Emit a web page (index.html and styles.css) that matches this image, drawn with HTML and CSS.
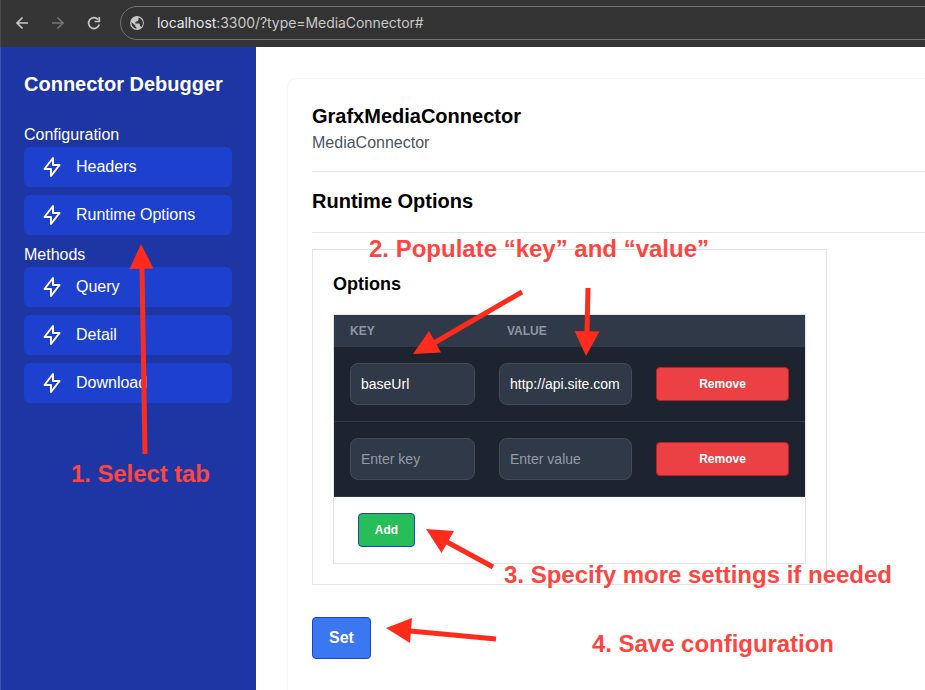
FILE: index.html
```html
<!DOCTYPE html>
<html lang="en">
<head>
<meta charset="utf-8">
<title>Connector Debugger</title>
<link rel="stylesheet" href="styles.css">
</head>
<body>
<svg class="defs" width="0" height="0" aria-hidden="true">
  <symbol id="bolt" viewBox="0 0 24 24"><path d="M13 10V3L4.500 14H11v7l8.500-11H13z" fill="none" stroke="#fff" stroke-width="2" stroke-linecap="round" stroke-linejoin="round"/></symbol>
</svg>
<header class="toolbar">
  <svg class="nav-icons" width="120" height="47" fill="none" stroke="#c7c7c7" stroke-width="1.7">
    <path d="M28 23H17.5M22.5 17.5L17 23L22.5 28.5"/>
    <path stroke="#757575" d="M52 23H62.5M57.5 17.5L63 23L57.5 28.5"/>
    <path d="M98 19.5A5.4 5.4 0 1 0 99.2 24.5M99.3 17V21.5H94.5"/>
  </svg>
  <div class="address">
    <svg class="globe" width="14" height="14" viewBox="0 0 14 14"><circle cx="7" cy="7" r="6.9" fill="#c7c7c7"/><path fill="#353535" d="M1.5 6.2L5.2 9.2V10.3L6.4 11.3V12.7A5.8 5.8 0 0 1 1.5 6.2ZM8.5 1.5A5.8 5.8 0 0 1 11.5 10.9L10.5 10.2H9.9V8.2L9.2 7.6H5.2V6.3H6.5V4.9H7.9L8.5 3.6Z"/></svg>
    <span class="url">localhost<span class="url-rest">:3300/?type=MediaConnector#</span></span>
  </div>
</header>
<div class="page">
  <aside class="sidebar">
    <h1 class="brand">Connector Debugger</h1>
    <h2 class="group">Configuration</h2>
    <a class="tab"><svg class="bolt"><use href="#bolt"/></svg>Headers</a>
    <a class="tab"><svg class="bolt"><use href="#bolt"/></svg>Runtime Options</a>
    <h2 class="group">Methods</h2>
    <a class="tab"><svg class="bolt"><use href="#bolt"/></svg>Query</a>
    <a class="tab"><svg class="bolt"><use href="#bolt"/></svg>Detail</a>
    <a class="tab"><svg class="bolt"><use href="#bolt"/></svg>Download</a>
  </aside>
  <main class="content">
    <section class="card">
      <div class="section intro"><h2 class="title name">GrafxMediaConnector</h2><p class="subtitle">MediaConnector</p></div>
      <div class="section"><h2 class="title">Runtime Options</h2></div>
      <div class="panel">
        <h3 class="panel-title">Options</h3>
        <div class="table">
          <div class="head"><span>KEY</span><span>VALUE</span><span></span></div>
          <div class="row"><input class="field" value="baseUrl"><input class="field" value="http://api.site.com"><button class="button remove">Remove</button></div>
          <div class="row"><input class="field" placeholder="Enter key"><input class="field" placeholder="Enter value"><button class="button remove">Remove</button></div>
          <div class="foot"><button class="button add">Add</button></div>
        </div>
      </div>
      <button class="set">Set</button>
    </section>
  </main>
</div>
<svg class="notes" width="925" height="690" viewBox="0 0 925 690">
  <g class="arrows">
    <path d="M145 454L142 268"/><path class="tip" d="M141 244L153.500 268.500L129.500 269Z"/>
    <path d="M522 292L434 343"/><path class="tip" d="M413 354L429 331L441 352.500Z"/>
    <path d="M588 288L587 332"/><path class="tip" d="M586 356L574.500 331L599.500 331.500Z"/>
    <path d="M493 567L447 542"/><path class="tip" d="M426 529L454 531L441.500 553Z"/>
    <path d="M496 639L410 631"/><path class="tip" d="M386 628L412 618L410 643Z"/>
  </g>
  <g class="labels">
    <text x="71" y="481.500" textLength="139">1. Select tab</text>
    <text x="369" y="256.500" textLength="340">2. Populate “key” and “value”</text>
    <text x="504" y="582.500" textLength="388">3. Specify more settings if needed</text>
    <text x="592" y="651.500" textLength="242">4. Save configuration</text>
  </g>
</svg>
</body>
</html>
```
FILE: styles.css
```css
* { box-sizing: border-box; }
body { margin: 0; height: 690px; overflow: hidden; position: relative; background: #fff; color: #000; font: 16px/24px "Liberation Sans", Arial, sans-serif; }
h1, h2, h3, p { margin: 0; font-size: inherit; font-weight: inherit; }
.defs { position: absolute; }
.toolbar { display: flex; align-items: center; height: 47px; background: #353535; border-left: 1px solid #4a4a4a; overflow: hidden; }
.nav-icons { flex: none; width: 119px; margin-left: -1px; margin-right: 1px; }
.address { flex: none; display: flex; align-items: center; width: 850px; height: 34px; margin-top: -1px; padding-left: 9px; border: 1px solid #737373; border-radius: 17px; background: #333; }
.globe { margin-right: 13px; }
.url { font: 14px/20px Inter, sans-serif; color: #e6e6e6; letter-spacing: -0.06px; }
.url-rest { color: #c9c9c9; }
.page { display: flex; height: 643px; }
.sidebar { flex: none; width: 256px; padding: 23px 24px 24px 23px; background: #1e36a3; border-left: 1px solid #4053aa; color: #fff; }
.brand { margin-bottom: 25px; font-size: 20px; line-height: 28px; font-weight: 700; }
.group { height: 24px; }
.tab { display: flex; align-items: center; height: 40px; margin-bottom: 8px; padding-left: 16px; padding-bottom: 1px; border-radius: 6px; background: #1e40cf; }
.bolt { width: 24px; height: 24px; margin: 1px 12px 0 0; }
.content { flex: 1; min-width: 0; padding: 32px 0 0 32px; overflow: hidden; }
.card { width: 700px; height: 640px; padding: 24px; border-radius: 8px; box-shadow: 0 0 2px rgba(0,0,0,.13); }
.section { padding-bottom: 16px; margin-bottom: 16px; border-bottom: 1px solid #e2e4e8; }
.title { font-size: 20px; line-height: 28px; margin-top: -1px; margin-bottom: 1px; font-weight: 700; }
.subtitle { color: #4b5563; height: 24px; }
.panel { width: 515px; padding: 20px; border: 1px solid #e2e4e8; }
.panel-title { margin-bottom: 16px; font-size: 18px; line-height: 28px; font-weight: 700; }
.table { border: 1px solid #e2e4e8; }
.head { display: grid; grid-template-columns: repeat(3, 1fr); height: 32px; background: #303947; color: #8d96a5; font-size: 12px; line-height: 32px; font-weight: 700; }
.head span { padding-left: 16px; }
.row { display: grid; grid-template-columns: 125px 133px 133px; gap: 24px; align-items: center; height: 75px; padding: 0 16px; background: #1e242f; border-bottom: 1px solid #303947; }
.field { width: 100%; height: 42px; padding: 0 10px; border: 1px solid #434b58; border-radius: 8px; background: #303947; color: #fff; font: 14px "Liberation Sans", Arial, sans-serif; }
.field::placeholder { color: #949ba6; opacity: 1; }
.button { height: 34px; padding: 0; border: 1px solid #b8212b; border-radius: 4px; color: #fff; font: 700 12px "Liberation Sans", Arial, sans-serif; }
.remove { background: #eb4044; }
.foot { height: 66px; padding: 16px 24px; display: flex; }
.add { width: 57px; background: #27bd58; border-color: #1e40cf; }
.set { display: block; width: 59px; height: 42px; margin-top: 32px; padding: 0; border: 1px solid #1e40cf; border-radius: 4px; background: #3a77f0; color: #fff; font: 700 16px "Liberation Sans", Arial, sans-serif; }
.notes { position: absolute; left: 0; top: 0; pointer-events: none; }
.arrows { fill: none; stroke: #ff2b1c; stroke-width: 5; }
.tip { fill: #ff2b1c; stroke: none; }
.labels { fill: #ff453f; font: 700 24px "Liberation Sans", Arial, sans-serif; }
```
